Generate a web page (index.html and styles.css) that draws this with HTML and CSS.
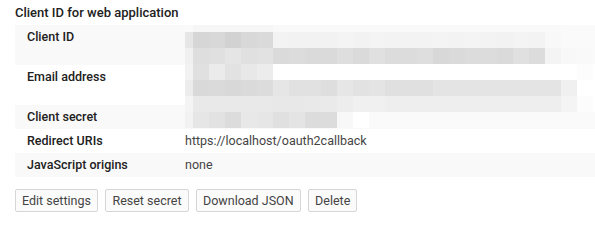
FILE: index.html
```html
<!DOCTYPE html>
<html lang="en">
<head>
  <meta charset="UTF-8" />
  <title>Client ID for web application</title>
  <link rel="stylesheet" href="styles.css">
</head>
<body>
  <div class="panel">
    <h2>Client ID for web application</h2>

    <div class="details">
      <div class="row shaded tall">
        <div class="label">Client ID</div>
        <div class="value"></div>
      </div>
      <div class="row tall">
        <div class="label">Email address</div>
        <div class="value"></div>
      </div>
      <div class="row shaded">
        <div class="label">Client secret</div>
        <div class="value"></div>
      </div>
      <div class="row">
        <div class="label">Redirect URIs</div>
        <div class="value">https://localhost/oauth2callback</div>
      </div>
      <div class="row shaded">
        <div class="label">JavaScript origins</div>
        <div class="value">none</div>
      </div>

      <!-- redacted values, pixelated -->
      <div class="mosaic" id="mosaic"></div>
    </div>

    <div class="actions">
      <button>Edit settings</button>
      <button>Reset secret</button>
      <button>Download JSON</button>
      <button>Delete</button>
    </div>
  </div>

  <script>
    // first column is an 8px sliver, then 16px blocks; first row is 7px tall
    const rows = [
      "fa f6 f6 f6 f6 f6 f9 f9 f9 f9 f9 f9 f9 f9 f9 f9 f9 f9 f9 f9 f9 f9 f9 f9 fa fa fa",
      "e6 d6 d8 d2 d8 da f3 f2 f2 f2 f4 f2 f4 f3 f3 f3 f4 f3 f4 f3 f2 f4 f3 f8 fa fa fa",
      "f0 de e0 e5 e0 e2 da dc da da de da e0 dc dc de d8 da dc dc da e0 dc f4 f8 f9 fa",
      "f2 e0 eb e2 e8 ec ff ff ff ff ff ff ff ff ff ff ff ff ff ff ff ff ff ff ff fc ff",
      "ec d9 da d8 da dc e6 e1 e1 de e6 e2 e4 e0 e0 e0 e4 e4 e4 e4 e4 e4 e4 e4 f0 ff ff",
      "f4 e9 e9 e9 e9 e9 e8 e8 e9 ea ed f0 f0 ee ee ee ee ee ee ee ee ee ee ee f4 fc ff",
      "f2 e6 e2 dc e8 e6 e0 e4 dc dc f8 ff fa fa fa fa fa fa fa fa fa fa fa fa fa fa fa"
    ];

    const mosaic = document.getElementById("mosaic");
    rows.forEach(line => {
      line.split(" ").forEach(v => {
        const cell = document.createElement("span");
        cell.style.background = "#" + v + v + v;
        mosaic.appendChild(cell);
      });
    });
  </script>
</body>
</html>
```

FILE: styles.css
```css
* {
  box-sizing: border-box;
}

body {
  margin: 0;
  padding: 4px 0 0 15px;
  font-family: Roboto, "Liberation Sans", sans-serif;
  font-size: 12.5px;
  color: #212121;
  background: #fff;
  overflow: hidden;
}

h2 {
  margin: 0 0 4px;
  font-size: 13px;
  font-weight: 500;
  line-height: 17px;
  color: #212121;
}

.details {
  position: relative;
  width: 600px;
}

.row {
  display: flex;
  padding: 5px 12px 5px 12px;
  line-height: 14px;
  height: 24px;
}

.row.tall {
  height: 40px;
}

.row.shaded {
  background: #f9f9f9;
}

.label {
  width: 158px;
  font-weight: 500;
  color: #212121;
}

.value {
  color: #444;
}

.mosaic {
  position: absolute;
  left: 170px;
  top: 0;
  display: grid;
  grid-template-columns: 8px repeat(26, 16px);
  grid-template-rows: 7px repeat(6, 16px);
}

.actions {
  display: flex;
  gap: 7.5px;
  margin-top: 12px;
}

button {
  font-family: Roboto, "Liberation Sans", sans-serif;
  font-size: 12.5px;
  color: #444;
  background: #fbfbfb;
  border: 1px solid #d6d6d6;
  border-radius: 2px;
  height: 23px;
  padding: 0 6px;
  cursor: pointer;
}
```
